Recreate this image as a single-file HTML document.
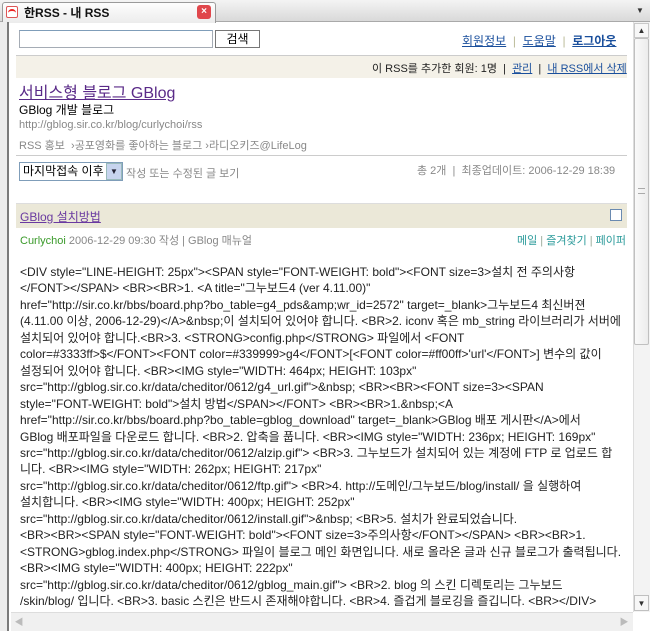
<!DOCTYPE html>
<html><head><meta charset="utf-8">
<style>
*{margin:0;padding:0;box-sizing:border-box}
body{width:650px;height:631px;overflow:hidden;background:#fff;font-family:"Liberation Sans","Noto Sans CJK KR",sans-serif;font-size:12px;color:#000;position:relative}
.abs{position:absolute;white-space:nowrap}
a{color:#1a4f9c}
.tabbar{left:0;top:0;width:650px;height:22px;background:linear-gradient(#f4f4f4,#d9d9d9);border-bottom:1px solid #a9a9a9}
.tab{left:2px;top:2px;width:214px;height:21px;background:linear-gradient(#fdfdfd,#ececec);border:1px solid #9a9a9a;border-bottom:none;border-radius:3px 3px 0 0}
.leftstrip{left:0;top:22px;width:9px;height:609px;background:#ececec;border-right:2px solid #7a7a7a}
.vs{left:633px;top:22px;width:17px;height:590px;background:#f3f3f3;border-left:1px solid #ddd}
.hs{left:11px;top:612px;width:622px;height:19px;background:#f0f0f0;border-top:1px solid #ddd}
.gray{color:#888}
.body{left:20px;top:264px;line-height:16.45px;font-size:12px;color:#222}
</style></head><body>
<div class="abs tabbar"></div>
<div class="abs tab"></div>
<div class="abs" style="left:6px;top:6px;width:12px;height:12px;border:1px solid #d55;background:#fff;border-radius:2px"></div>
<div class="abs" style="left:8px;top:9px;width:8px;height:4px;border-top:2px solid #e22;border-radius:4px 4px 0 0"></div>
<div class="abs" style="left:24px;top:4px;font-size:12px;font-weight:bold;color:#111">한RSS - 내 RSS</div>
<div class="abs" style="left:197px;top:5px;width:14px;height:14px;background:#e0474c;border-radius:3px;color:#fff;font-size:10px;text-align:center;line-height:14px;font-weight:bold">×</div>
<div class="abs" style="left:636px;top:6px;font-size:8px;color:#333">▼</div>
<div class="abs leftstrip"></div>
<div class="abs vs"></div>
<div class="abs" style="left:634px;top:23px;width:15px;height:15px;background:#f7f7f7;border:1px solid #c8c8c8;font-size:8px;text-align:center;line-height:14px;color:#333">▲</div>
<div class="abs" style="left:634px;top:38px;width:15px;height:307px;background:linear-gradient(90deg,#fafafa,#ececec);border:1px solid #c0c0c0;border-radius:2px"></div>
<div class="abs" style="left:638px;top:188px;width:7px;height:6px;border-top:1px solid #aaa;border-bottom:1px solid #aaa"></div>
<div class="abs" style="left:634px;top:595px;width:15px;height:16px;background:#f7f7f7;border:1px solid #c0c0c0;font-size:8px;text-align:center;line-height:15px;color:#333">▼</div>
<div class="abs hs"></div>
<div class="abs" style="left:12px;top:614px;width:14px;height:16px;color:#bbb;font-size:9px;text-align:center;line-height:16px">◀</div>
<div class="abs" style="left:617px;top:614px;width:14px;height:16px;color:#bbb;font-size:9px;text-align:center;line-height:16px">▶</div>

<div class="abs" style="left:19px;top:30px;width:194px;height:18px;border:1px solid #a5acb5;border-top-color:#7f9db9"></div>
<div class="abs" style="left:215px;top:30px;width:45px;height:18px;border:1px solid #777;background:#fff;text-align:center;line-height:16px;font-size:12px">검색</div>
<div class="abs" style="left:462px;top:32px;font-size:12px"><a href="#">회원정보</a> <span style="color:#bb9">&nbsp;|&nbsp;</span> <a href="#">도움말</a> <span style="color:#bb9">&nbsp;|&nbsp;</span> <a href="#" style="font-weight:bold">로그아웃</a></div>

<div class="abs" style="left:16px;top:55px;width:611px;height:23px;background:#f4f1e8;border-top:1px solid #ccc"></div>
<div class="abs" style="left:372px;top:60px;font-size:11px;color:#222">이 RSS를 추가한 회원: 1명 &nbsp;|&nbsp; <a href="#">관리</a> &nbsp;|&nbsp; <a href="#">내 RSS에서 삭제</a></div>

<div class="abs" style="left:19px;top:79px;font-size:16px"><a href="#" style="color:#5a2a88">서비스형 블로그 GBlog</a></div>
<div class="abs" style="left:19px;top:101px;font-size:12px">GBlog 개발 블로그</div>
<div class="abs gray" style="left:19px;top:119px;font-size:11px">http://gblog.sir.co.kr/blog/curlychoi/rss</div>
<div class="abs gray" style="left:19px;top:137px;font-size:11px">RSS 홍보 &nbsp;›공포영화를 좋아하는 블로그 ›라디오키즈@LifeLog</div>
<div class="abs" style="left:16px;top:155px;width:611px;height:1px;background:#ccc"></div>

<div class="abs" style="left:19px;top:162px;width:104px;height:19px;border:1px solid #7f9db9;background:#fff;font-size:12px;line-height:17px;padding-left:3px">마지막접속 이후</div>
<div class="abs" style="left:106px;top:163px;width:16px;height:17px;background:#c7d4ee;border:1px solid #9bb;font-size:8px;text-align:center;line-height:16px;color:#223">▼</div>
<div class="abs gray" style="left:126px;top:165px;font-size:11px">작성 또는 수정된 글 보기</div>
<div class="abs gray" style="left:417px;top:162px;font-size:11px">총 2개 &nbsp;|&nbsp; 최종업데이트: 2006-12-29 18:39</div>

<div class="abs" style="left:16px;top:203px;width:611px;height:25px;background:#ebe8d8;border-top:1px solid #ddd"></div>
<div class="abs" style="left:20px;top:208px;font-size:12px"><a href="#" style="color:#6a3aa0">GBlog 설치방법</a></div>
<div class="abs" style="left:610px;top:209px;width:12px;height:12px;border:1px solid #6a8ab0;background:#fff"></div>
<div class="abs" style="left:20px;top:232px;font-size:11px;color:#888"><span style="color:#3a9a2a">Curlychoi</span> 2006-12-29 09:30 작성 | GBlog 매뉴얼</div>
<div class="abs" style="left:517px;top:232px;font-size:11px;color:#2a9a9a">메일 <span style="color:#9a9">|</span> 즐겨찾기 <span style="color:#9a9">|</span> 페이퍼</div>

<div class="abs body">&lt;DIV style="LINE-HEIGHT: 25px"&gt;&lt;SPAN style="FONT-WEIGHT: bold"&gt;&lt;FONT size=3&gt;설치 전 주의사항<br>
&lt;/FONT&gt;&lt;/SPAN&gt; &lt;BR&gt;&lt;BR&gt;1. &lt;A title="그누보드4 (ver 4.11.00)"<br>
href="http://sir.co.kr/bbs/board.php?bo_table=g4_pds&amp;amp;wr_id=2572" target=_blank&gt;그누보드4 최신버젼<br>
(4.11.00 이상, 2006-12-29)&lt;/A&gt;&amp;nbsp;이 설치되어 있어야 합니다. &lt;BR&gt;2. iconv 혹은 mb_string 라이브러리가 서버에<br>
설치되어 있어야 합니다.&lt;BR&gt;3. &lt;STRONG&gt;config.php&lt;/STRONG&gt; 파일에서 &lt;FONT<br>
color=#3333ff&gt;$&lt;/FONT&gt;&lt;FONT color=#339999&gt;g4&lt;/FONT&gt;[&lt;FONT color=#ff00ff&gt;'url'&lt;/FONT&gt;] 변수의 값이<br>
설정되어 있어야 합니다. &lt;BR&gt;&lt;IMG style="WIDTH: 464px; HEIGHT: 103px"<br>
src="http://gblog.sir.co.kr/data/cheditor/0612/g4_url.gif"&gt;&amp;nbsp; &lt;BR&gt;&lt;BR&gt;&lt;FONT size=3&gt;&lt;SPAN<br>
style="FONT-WEIGHT: bold"&gt;설치 방법&lt;/SPAN&gt;&lt;/FONT&gt; &lt;BR&gt;&lt;BR&gt;1.&amp;nbsp;&lt;A<br>
href="http://sir.co.kr/bbs/board.php?bo_table=gblog_download" target=_blank&gt;GBlog 배포 게시판&lt;/A&gt;에서<br>
GBlog 배포파일을 다운로드 합니다. &lt;BR&gt;2. 압축을 풉니다. &lt;BR&gt;&lt;IMG style="WIDTH: 236px; HEIGHT: 169px"<br>
src="http://gblog.sir.co.kr/data/cheditor/0612/alzip.gif"&gt; &lt;BR&gt;3. 그누보드가 설치되어 있는 계정에 FTP 로 업로드 합<br>
니다. &lt;BR&gt;&lt;IMG style="WIDTH: 262px; HEIGHT: 217px"<br>
src="http://gblog.sir.co.kr/data/cheditor/0612/ftp.gif"&gt; &lt;BR&gt;4. http://도메인/그누보드/blog/install/ 을 실행하여<br>
설치합니다. &lt;BR&gt;&lt;IMG style="WIDTH: 400px; HEIGHT: 252px"<br>
src="http://gblog.sir.co.kr/data/cheditor/0612/install.gif"&gt;&amp;nbsp; &lt;BR&gt;5. 설치가 완료되었습니다.<br>
&lt;BR&gt;&lt;BR&gt;&lt;SPAN style="FONT-WEIGHT: bold"&gt;&lt;FONT size=3&gt;주의사항&lt;/FONT&gt;&lt;/SPAN&gt; &lt;BR&gt;&lt;BR&gt;1.<br>
&lt;STRONG&gt;gblog.index.php&lt;/STRONG&gt; 파일이 블로그 메인 화면입니다. 새로 올라온 글과 신규 블로그가 출력됩니다.<br>
&lt;BR&gt;&lt;IMG style="WIDTH: 400px; HEIGHT: 222px"<br>
src="http://gblog.sir.co.kr/data/cheditor/0612/gblog_main.gif"&gt; &lt;BR&gt;2. blog 의 스킨 디렉토리는 그누보드<br>
/skin/blog/ 입니다. &lt;BR&gt;3. basic 스킨은 반드시 존재해야합니다. &lt;BR&gt;4. 즐겁게 블로깅을 즐깁니다. &lt;BR&gt;&lt;/DIV&gt;</div>
</body></html>
